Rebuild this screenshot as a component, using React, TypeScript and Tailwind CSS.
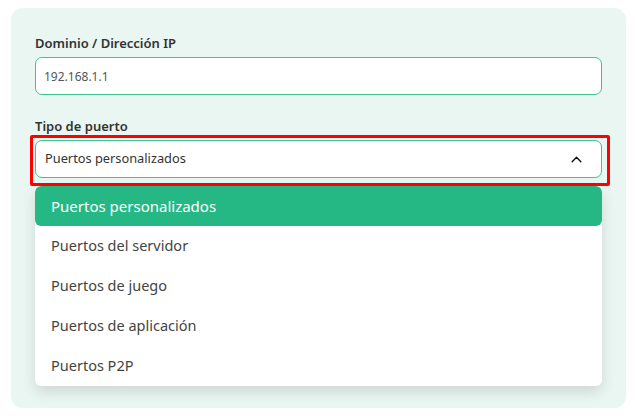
import React from 'react';

const options = [
  'Puertos personalizados',
  'Puertos del servidor',
  'Puertos de juego',
  'Puertos de aplicación',
  'Puertos P2P',
];

function App() {
  const selected = options[0];

  return (
    <div className="min-h-screen bg-white pl-[11px] pt-[8px]" style={{ fontFamily: '"Noto Sans", "Open Sans", sans-serif' }}>
      <div className="relative w-[615px] h-[400px] rounded-xl bg-[#eaf6f1] px-[24px] pt-[25px]">
        <label className="block text-[13px] font-semibold text-[#333] leading-5 mb-[4px]">
          Dominio / Dirección IP
        </label>
        <input
          type="text"
          defaultValue="192.168.1.1"
          className="block w-[567px] h-[38px] rounded-[7px] border border-[#3fc390] bg-white px-[8px] text-[12px] text-[#555] outline-none"
        />

        <label className="block text-[13px] font-semibold text-[#333] leading-5 mt-[21px] mb-[4px]">
          Tipo de puerto
        </label>
        <div className="relative w-[567px]">
          <div className="absolute -left-[5px] -top-[5px] -right-[8px] -bottom-[8px] border-[3px] border-[#ff0000] rounded-[2px] pointer-events-none" />
          <button className="flex w-full h-[38px] items-center justify-between rounded-[7px] border border-[#3fc390] bg-white pl-[9px] pr-[18px] text-[12.8px] text-[#333]">
            <span>{selected}</span>
            <svg width="13" height="13" viewBox="0 0 24 24" fill="none" stroke="#111" strokeWidth="2.6" strokeLinecap="round" strokeLinejoin="round">
              <path d="M4 16l8-8 8 8" />
            </svg>
          </button>

          <ul className="absolute left-0 top-[46px] w-full rounded-md bg-white shadow-[0_6px_14px_rgba(0,0,0,0.12)] overflow-hidden">
            {options.map((o) => (
              <li
                key={o}
                className={
                  o === selected
                    ? 'h-[40px] flex items-center px-[16px] text-[15px] bg-[#26b884] text-white rounded-md'
                    : 'h-[40px] flex items-center px-[16px] text-[14.5px] text-[#444]'
                }
              >
                {o}
              </li>
            ))}
          </ul>
        </div>
      </div>
    </div>
  );
}

export default App;
